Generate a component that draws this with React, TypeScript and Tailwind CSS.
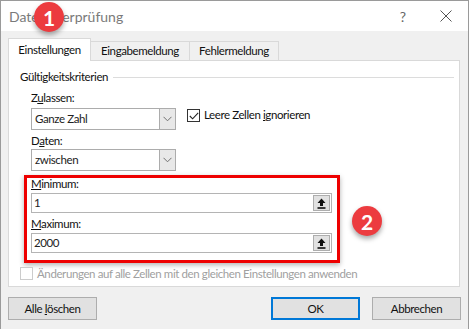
import React from "react";

const font = { fontFamily: 'Lato, "Liberation Sans", sans-serif' };

function Chevron() {
  return (
    <svg width="9" height="6" viewBox="0 0 9 6" fill="none">
      <polyline points="0.5,0.8 4.5,4.8 8.5,0.8" stroke="#707070" strokeWidth="1" />
    </svg>
  );
}

function Combo({ value }: { value: string }) {
  return (
    <div className="flex h-[22px] w-[145px] border border-[#acacac] bg-white">
      <div className="flex flex-1 items-center pl-[3px] text-[#222]">{value}</div>
      <div className="flex w-[16px] items-center justify-center border-l border-[#acacac] bg-[#e8e8e8]">
        <Chevron />
      </div>
    </div>
  );
}

function RefEdit({ value }: { value: string }) {
  return (
    <div className="flex h-[20px] w-[301px] border border-[#b4b4b4] bg-white">
      <div className="flex flex-1 items-center pl-[2px] text-[#222]">{value}</div>
      <div className="m-[1px] flex w-[17px] items-center justify-center border border-[#adadad] bg-[#e1e1e1]">
        <svg width="9" height="11" viewBox="0 0 9 11">
          <polygon points="4.5,0.5 8.5,5 6,5 6,8 3,8 3,5 0.5,5" fill="#111" />
          <rect x="0.5" y="9.2" width="8" height="1.6" fill="#111" />
        </svg>
      </div>
    </div>
  );
}

function Badge({ n, className }: { n: string; className: string }) {
  return (
    <div
      className={`absolute flex h-[30px] w-[30px] items-center justify-center rounded-full bg-[#ec3b3f] text-[21px] font-bold leading-none text-white shadow-[0_3px_5px_rgba(0,0,0,0.35)] ${className}`}
    >
      {n}
    </div>
  );
}

function Button({ label, primary }: { label: React.ReactNode; primary?: boolean }) {
  return (
    <div
      className={`flex h-[23px] w-[89px] items-center justify-center bg-[#e1e1e1] text-[#111] ${
        primary ? "border-2 border-[#0078d7]" : "border border-[#adadad]"
      }`}
    >
      {label}
    </div>
  );
}

export default function App() {
  return (
    <div style={font} className="relative h-[329px] w-[469px] overflow-hidden border-l border-r border-t border-[#9a9a9a] bg-[#f0f0f0]">
      {/* Title bar */}
      <div className="flex h-[30px] items-center bg-white pl-[8px] pr-[16px] text-[14px] text-[#7a7a7a]">
        <span className="flex-1">Datenüberprüfung</span>
        <span className="mr-[34px] text-[14px] text-[#666]">?</span>
        <svg width="12" height="12" viewBox="0 0 12 12">
          <path d="M0.5 0.5 L11.5 11.5 M11.5 0.5 L0.5 11.5" stroke="#555" strokeWidth="1" />
        </svg>
      </div>

      <div className="px-[7px] text-[11.5px] tracking-[-0.4px]">
        {/* Tabs */}
        <div className="mt-[7px] flex h-[22px] items-end text-[#111]">
          <div className="relative z-10 mb-[-1px] flex h-[23px] w-[83px] items-center justify-center border-l border-r border-t border-[#d9d9d9] bg-white pb-[1px]">
            Einstellungen
          </div>
          <div className="flex h-[19px] w-[99px] items-center justify-center border-r border-t border-[#d9d9d9]">
            Eingabemeldung
          </div>
          <div className="flex h-[19px] w-[89px] items-center justify-center border-r border-t border-[#d9d9d9]">
            Fehlermeldung
          </div>
        </div>

        {/* Panel */}
        <div className="h-[227px] w-[452px] border border-[#d9d9d9] bg-white text-[#111]">
          <div className="ml-[11px] mr-[5px] mt-[8px] flex h-[16px] items-center">
            <span>Gültigkeitskriterien</span>
            <div className="ml-[5px] mt-[1px] flex-1 border-t border-[#dcdcdc]" />
          </div>

          <div className="ml-[22px] mt-[6px] h-[14px] leading-[14px]">
            Z<span className="underline">u</span>lassen:
          </div>
          <div className="ml-[22px] mt-[3px] flex items-start">
            <Combo value="Ganze Zahl" />
            <div className="ml-[11px] mt-[1px] flex h-[13px] w-[13px] items-center justify-center border border-[#333] bg-white">
              <svg width="10" height="8" viewBox="0 0 10 8" fill="none">
                <polyline points="0.8,4 3.6,6.8 9.2,0.8" stroke="#222" strokeWidth="1.1" />
              </svg>
            </div>
            <span className="ml-[4px] mt-[-1px] leading-[16px]">
              Leere Zellen <span className="underline">i</span>gnorieren
            </span>
          </div>

          <div className="ml-[22px] mt-[4px] h-[14px] leading-[14px]">
            D<span className="underline">a</span>ten:
          </div>
          <div className="ml-[22px] mt-[1px]">
            <Combo value="zwischen" />
          </div>

          {/* Highlight box */}
          <div className="ml-[15px] mt-[4px] h-[88px] w-[316px] border-[3px] border-[#ee0000] pl-[4px] shadow-[0_2px_5px_rgba(0,0,0,0.3)]">
            <div className="mt-[-1px] h-[14px] leading-[14px]">
              <span className="underline">M</span>inimum:
            </div>
            <div className="mt-[2px]">
              <RefEdit value="1" />
            </div>
            <div className="mt-[4px] h-[14px] leading-[14px]">
              <span className="underline">M</span>aximum:
            </div>
            <div className="mt-[2px]">
              <RefEdit value="2000" />
            </div>
          </div>

          <div className="ml-[11px] mt-[2px] flex items-center">
            <div className="h-[13px] w-[13px] border border-[#cccccc] bg-white" />
            <span className="ml-[4px] text-[#a0a0a0]">
              Änderungen auf alle Zellen mit den gleichen Einstellungen anwenden
            </span>
          </div>
        </div>

        {/* Buttons */}
        <div className="mt-[10px] flex">
          <Button label={<span>Alle <span className="underline">l</span>öschen</span>} />
          <div className="flex-1" />
          <Button label="OK" primary />
          <div className="w-[12px]" />
          <Button label="Abbrechen" />
        </div>
      </div>

      <Badge n="1" className="left-[33px] top-[1px]" />
      <Badge n="2" className="left-[351px] top-[205px]" />
    </div>
  );
}
